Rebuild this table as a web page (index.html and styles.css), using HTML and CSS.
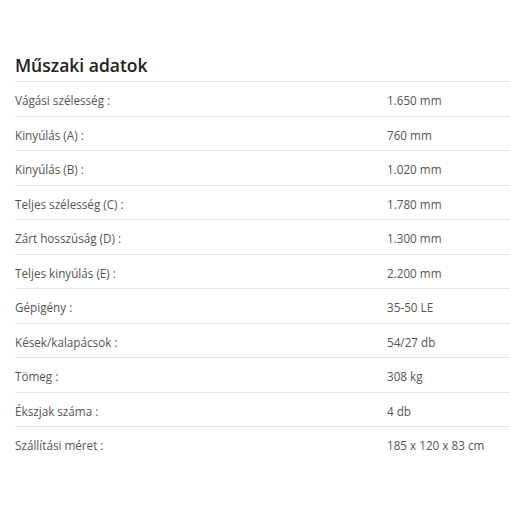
FILE: index.html
```html
<!DOCTYPE html>
<html lang="hu">
<head>
<meta charset="utf-8">
<link rel="stylesheet" href="styles.css">
</head>
<body>
<section class="specs">
  <h2 class="specs-title">Műszaki adatok</h2>
  <div class="specs-table">
    <div class="row"><span class="label">Vágási szélesség :</span><span class="value">1.650 mm</span></div>
    <div class="row"><span class="label">Kinyúlás (A) :</span><span class="value">760 mm</span></div>
    <div class="row"><span class="label">Kinyúlás (B) :</span><span class="value">1.020 mm</span></div>
    <div class="row"><span class="label">Teljes szélesség (C) :</span><span class="value">1.780 mm</span></div>
    <div class="row"><span class="label">Zárt hosszúság (D) :</span><span class="value">1.300 mm</span></div>
    <div class="row"><span class="label">Teljes kinyúlás (E) :</span><span class="value">2.200 mm</span></div>
    <div class="row"><span class="label">Gépigény :</span><span class="value">35-50 LE</span></div>
    <div class="row"><span class="label">Kések/kalapácsok :</span><span class="value">54/27 db</span></div>
    <div class="row"><span class="label">Tömeg :</span><span class="value">308 kg</span></div>
    <div class="row"><span class="label">Ékszjak száma :</span><span class="value">4 db</span></div>
    <div class="row"><span class="label">Szállítási méret :</span><span class="value">185 x 120 x 83 cm</span></div>
  </div>
</section>
</body>
</html>
```
FILE: styles.css
```css
html, body {
  margin: 0;
  padding: 0;
  background: #fff;
}
body {
  font-family: "Open Sans", "Noto Sans", sans-serif;
  color: #555;
}
.specs {
  padding: 52px 0 0 15px;
}
.specs-title {
  margin: 0 0 3px;
  font-size: 17.5px;
  line-height: 26px;
  font-weight: 600;
  color: #222;
}
.row {
  display: grid;
  grid-template-columns: 372px 1fr;
  height: 31px;
  padding-top: 2.5px;
  box-sizing: content-box;
  align-items: center;
  border-top: 1px solid #e6e6e6;
  font-size: 11.7px;
}
```
